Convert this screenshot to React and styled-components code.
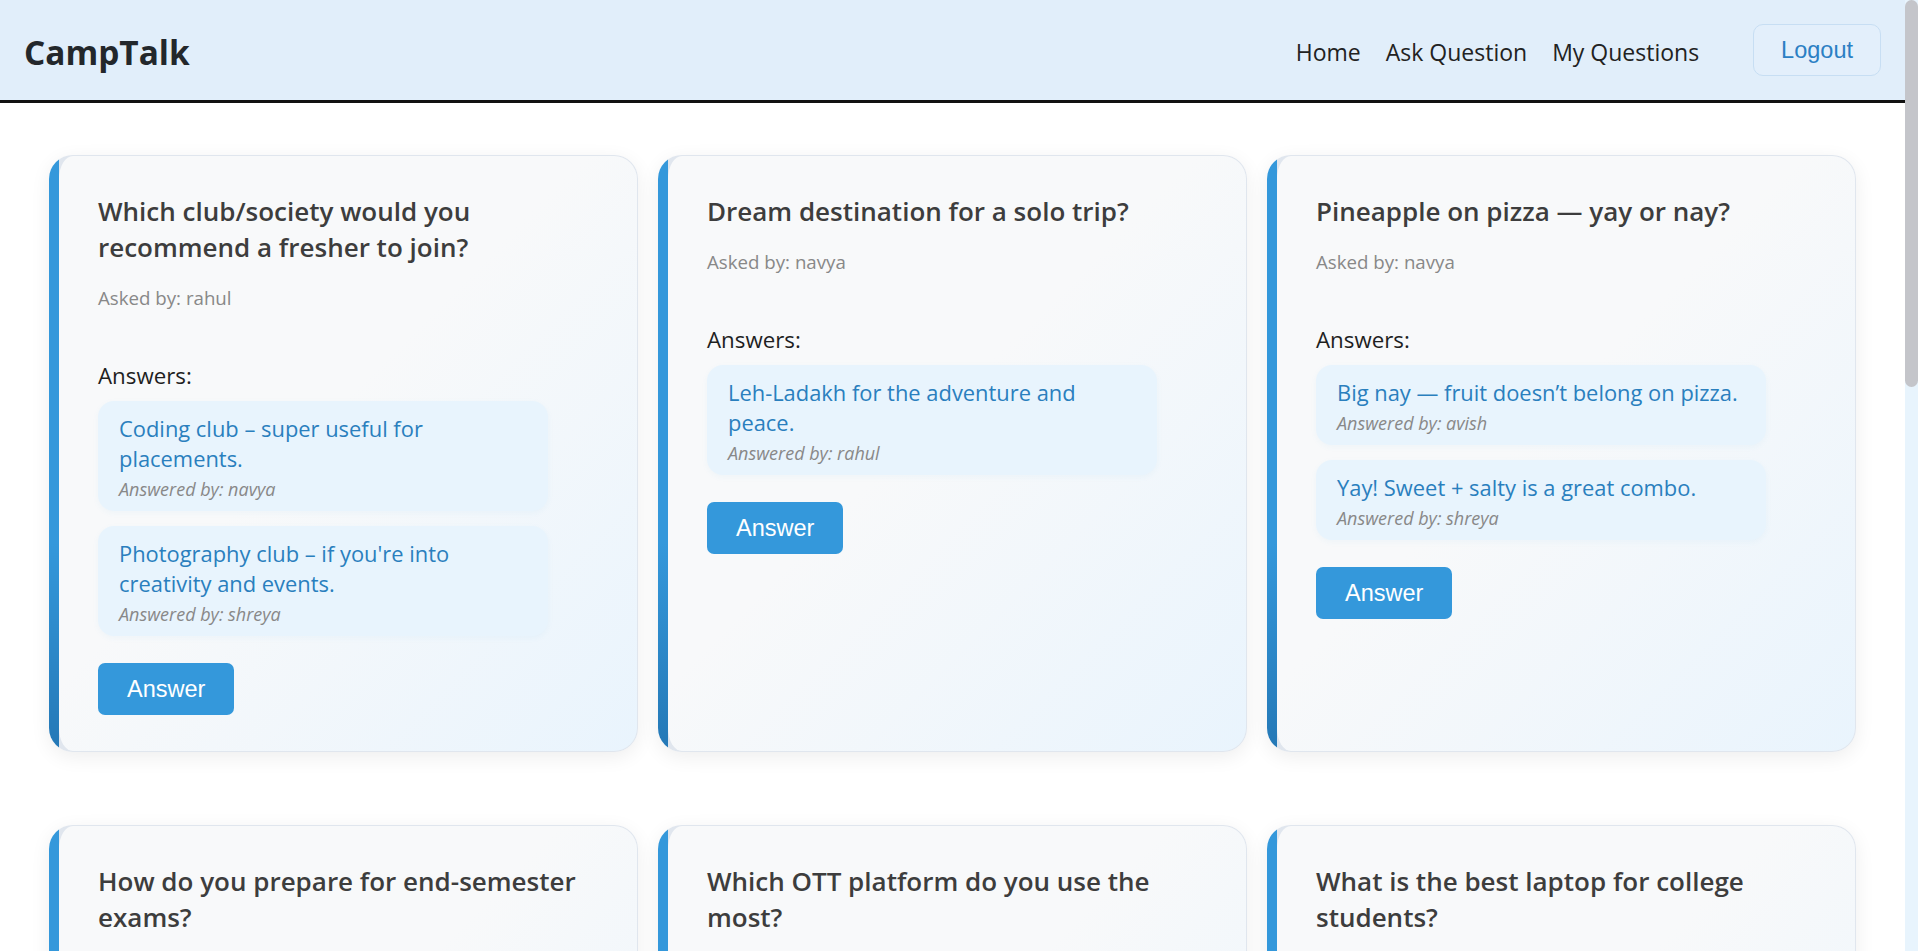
import React from "react";
import styled, { createGlobalStyle } from "styled-components";

const GlobalStyle = createGlobalStyle`
  html { background: #e8f4fd; }
  body {
    margin: 0 13px 0 0;
    font-family: "Open Sans", "Noto Sans", sans-serif;
    background: #ffffff;
    color: #222;
  }
  * { box-sizing: border-box; }
`;

const ScrollThumb = styled.div`
  position: fixed;
  top: 0;
  right: 0;
  width: 13px;
  height: 387px;
  background: #c4c5ca;
  border-radius: 7px;
`;

const Header = styled.header`
  height: 103px;
  display: flex;
  align-items: center;
  justify-content: space-between;
  padding: 0 24px;
  background: #e1eefa;
  border-bottom: 3px solid #111;
`;

const Logo = styled.div`
  font-size: 33.4px;
  font-weight: 700;
  color: #23272b;
  padding-top: 3px;
`;

const RightSide = styled.div`
  display: flex;
  align-items: center;
  gap: 54px;
`;

const Nav = styled.nav`
  display: flex;
  align-items: center;
  gap: 25px;
  padding-top: 4px;
`;

const NavLink = styled.a`
  font-size: 23px;
  color: #222;
  text-decoration: none;
  cursor: pointer;
`;

const LogoutButton = styled.button`
  height: 52px;
  padding: 0 27px;
  font-family: "Liberation Sans", Arial, sans-serif;
  font-size: 23.5px;
  color: #2b7fc4;
  background: #e3effb;
  border: 1px solid #c7def3;
  border-radius: 10px;
  cursor: pointer;
`;

const Main = styled.main`
  padding: 52px 49px 60px;
`;

const Grid = styled.div`
  display: grid;
  grid-template-columns: repeat(3, 1fr);
  column-gap: 20px;
  row-gap: 73px;
`;

const Card = styled.article`
  border: 1px solid transparent;
  border-left-width: 10px;
  border-radius: 24px;
  padding: 37px 39px 36px;
  background:
    linear-gradient(135deg, #f8f9fa 0%, #f8f9fa 45%, #e9f4fd 100%) padding-box,
    linear-gradient(to right, transparent 10px, #e0e6ee 10px) border-box,
    linear-gradient(to bottom, #3498db 0%, #3498db 65%, #2478b6 100%) border-box;
  box-shadow: 0 5px 20px rgba(0, 0, 0, 0.07);
  display: flex;
  flex-direction: column;
  align-items: flex-start;
`;

const Title = styled.h3`
  margin: 0 0 20px;
  font-size: 26px;
  line-height: 36px;
  font-weight: 600;
  color: #3d3d3d;
`;

const AskedBy = styled.p`
  margin: 0;
  font-size: 18.7px;
  line-height: 26px;
  color: #888;
`;

const AnswersHeading = styled.h4`
  margin: 50px 0 10px;
  font-size: 22.3px;
  line-height: 30px;
  font-weight: 400;
  color: #1f1f1f;
`;

const AnswerList = styled.div`
  width: 90%;
  display: flex;
  flex-direction: column;
  gap: 15px;
`;

const Bubble = styled.div`
  background: #e8f4fd;
  border-radius: 16px;
  padding: 13px 14px 9px 21px;
  box-shadow: 0 2px 6px rgba(52, 152, 219, 0.05);
`;

const AnswerText = styled.p`
  margin: 0;
  font-size: 21.9px;
  line-height: 30px;
  color: #2a7fbe;
`;

const AnsweredBy = styled.p`
  margin: 3px 0 0;
  font-size: 18px;
  line-height: 25px;
  font-style: italic;
  color: #888;
`;

const AnswerButton = styled.button`
  margin-top: 27px;
  height: 52px;
  padding: 0 29px;
  font-family: "Liberation Sans", Arial, sans-serif;
  font-size: 23.5px;
  color: #fff;
  background: #3498db;
  border: none;
  border-radius: 7px;
  cursor: pointer;
`;

const questions = [
  {
    title: "Which club/society would you recommend a fresher to join?",
    askedBy: "rahul",
    answers: [
      { text: "Coding club – super useful for placements.", by: "navya" },
      { text: "Photography club – if you're into creativity and events.", by: "shreya" },
    ],
  },
  {
    title: "Dream destination for a solo trip?",
    askedBy: "navya",
    answers: [{ text: "Leh-Ladakh for the adventure and peace.", by: "rahul" }],
  },
  {
    title: "Pineapple on pizza — yay or nay?",
    askedBy: "navya",
    answers: [
      { text: "Big nay — fruit doesn’t belong on pizza.", by: "avish" },
      { text: "Yay! Sweet + salty is a great combo.", by: "shreya" },
    ],
  },
  {
    title: "How do you prepare for end-semester exams?",
    askedBy: "avish",
    answers: [
      { text: "Short notes plus previous year papers.", by: "rahul" },
      { text: "Group study the week before the exams.", by: "navya" },
    ],
  },
  {
    title: "Which OTT platform do you use the most?",
    askedBy: "shreya",
    answers: [
      { text: "Netflix, mostly for the series.", by: "avish" },
      { text: "Prime Video – cricket and movies.", by: "rahul" },
    ],
  },
  {
    title: "What is the best laptop for college students?",
    askedBy: "rahul",
    answers: [
      { text: "A ThinkPad – durable and great keyboard.", by: "shreya" },
    ],
  },
  {
    title: "Best place to hang out near campus?",
    askedBy: "shreya",
    answers: [
      { text: "The canteen near the library, always.", by: "navya" },
    ],
  },
  {
    title: "Morning classes or evening classes?",
    askedBy: "avish",
    answers: [
      { text: "Morning – the rest of the day stays free.", by: "rahul" },
    ],
  },
  {
    title: "Which programming language should I learn first?",
    askedBy: "navya",
    answers: [
      { text: "Python – simple syntax and tons of resources.", by: "avish" },
    ],
  },
];

function QuestionCard({ q }) {
  return (
    <Card>
      <Title>{q.title}</Title>
      <AskedBy>Asked by: {q.askedBy}</AskedBy>
      <AnswersHeading>Answers:</AnswersHeading>
      <AnswerList>
        {q.answers.map((a, i) => (
          <Bubble key={i}>
            <AnswerText>{a.text}</AnswerText>
            <AnsweredBy>Answered by: {a.by}</AnsweredBy>
          </Bubble>
        ))}
      </AnswerList>
      <AnswerButton>Answer</AnswerButton>
    </Card>
  );
}

export default function App() {
  return (
    <>
      <GlobalStyle />
      <ScrollThumb />
      <Header>
        <Logo>CampTalk</Logo>
        <RightSide>
          <Nav>
            <NavLink>Home</NavLink>
            <NavLink>Ask Question</NavLink>
            <NavLink>My Questions</NavLink>
          </Nav>
          <LogoutButton>Logout</LogoutButton>
        </RightSide>
      </Header>
      <Main>
        <Grid>
          {questions.map((q, i) => (
            <QuestionCard key={i} q={q} />
          ))}
        </Grid>
      </Main>
    </>
  );
}
